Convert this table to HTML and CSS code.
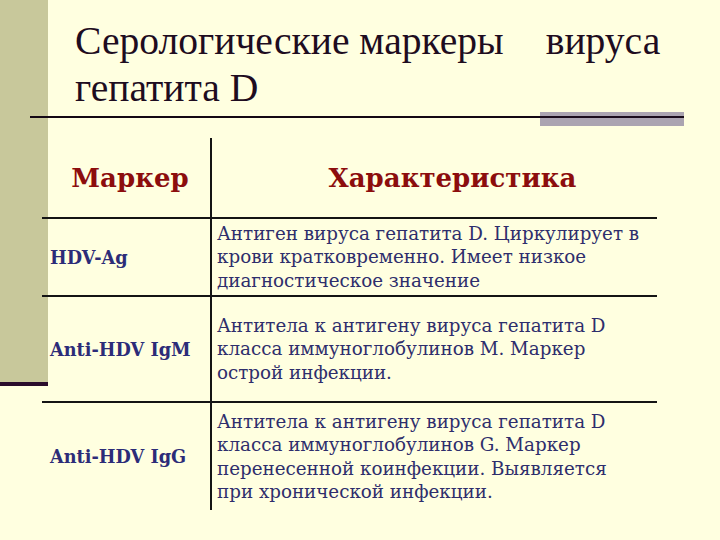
FILE: index.html
```html
<!DOCTYPE html>
<html lang="ru">
<head>
<meta charset="utf-8">
<title>Серологические маркеры вируса гепатита D</title>
<link rel="stylesheet" href="styles.css">
</head>
<body>
<div class="slide">
  <h1 class="title">Серологические маркеры<span class="gap">вируса</span><br>гепатита D</h1>
  <div class="rule">
    <div class="rule-line"></div>
    <div class="rule-bar"><div class="rule-bar-line"></div></div>
  </div>
  <div class="table">
    <div class="cell head left">Маркер</div>
    <div class="cell head right">Характеристика</div>

    <div class="cell marker left sep">HDV-Ag</div>
    <div class="cell desc right sep">Антиген вируса гепатита D. Циркулирует в крови кратковременно. Имеет низкое диагностическое значение</div>

    <div class="cell marker left sep">Anti-HDV IgM</div>
    <div class="cell desc right sep">Антитела к антигену вируса гепатита D класса иммуноглобулинов М. Маркер острой инфекции.</div>

    <div class="cell marker left sep">Anti-HDV IgG</div>
    <div class="cell desc right sep">Антитела к антигену вируса гепатита D класса иммуноглобулинов G. Маркер перенесенной коинфекции. Выявляется при хронической инфекции.</div>
  </div>
</div>
</body>
</html>
```
FILE: styles.css
```css
html, body {
  margin: 0;
  padding: 0;
}
body {
  width: 720px;
  height: 540px;
  overflow: hidden;
}
.slide {
  width: 720px;
  height: 540px;
  box-sizing: border-box;
  background:
    linear-gradient(#2a0c2c, #2a0c2c) 0 382px / 48px 4px no-repeat,
    linear-gradient(#c8c89b, #c8c89b) 0 0 / 48px 382px no-repeat,
    #ffffe0;
  display: flex;
  flex-direction: column;
}
.title {
  margin: 0;
  padding: 18px 0 0 75px;
  font-family: "Liberation Serif", "Times New Roman", serif;
  font-weight: normal;
  font-size: 39.6px;
  line-height: 47px;
  color: #1e0c20;
  white-space: nowrap;
}
.gap {
  margin-left: 42px;
}
.rule {
  display: flex;
  align-items: flex-start;
  margin: 0 0 0 30px;
  width: 654px;
  height: 14px;
}
.rule-line {
  flex: 1;
  height: 2px;
  margin-top: 4px;
  background: #140814;
}
.rule-bar {
  width: 144px;
  height: 14px;
  background: #aba4b1;
  display: flex;
  flex-direction: column;
}
.rule-bar-line {
  height: 2px;
  margin-top: 4px;
  background: #1a0c1c;
}
.table {
  margin: 12px 0 0 42px;
  width: 615px;
  display: grid;
  grid-template-columns: 168px 447px;
  grid-template-rows: 79px 78px 106px 109px;
}
.cell {
  display: flex;
  align-items: center;
  box-sizing: border-box;
}
.right {
  border-left: 2px solid #141414;
}
.sep {
  border-top: 2px solid #141414;
}
.head {
  font-family: "DejaVu Serif", "Liberation Serif", serif;
  font-weight: bold;
  font-size: 26px;
  color: #8c0d0d;
  padding-top: 0;
}
.head.left {
  justify-content: center;
  padding-left: 8px;
}
.head.right {
  justify-content: center;
  padding-left: 36px;
}
.marker {
  padding-left: 8px;
  font-family: "DejaVu Serif", "Liberation Serif", serif;
  font-weight: bold;
  font-size: 17.7px;
  color: #2c2c78;
}
.desc {
  padding: 0 12px 0 5px;
  font-family: "DejaVu Serif", "Liberation Serif", serif;
  font-size: 18.3px;
  line-height: 23.5px;
  color: #2e2e6c;
}
```
